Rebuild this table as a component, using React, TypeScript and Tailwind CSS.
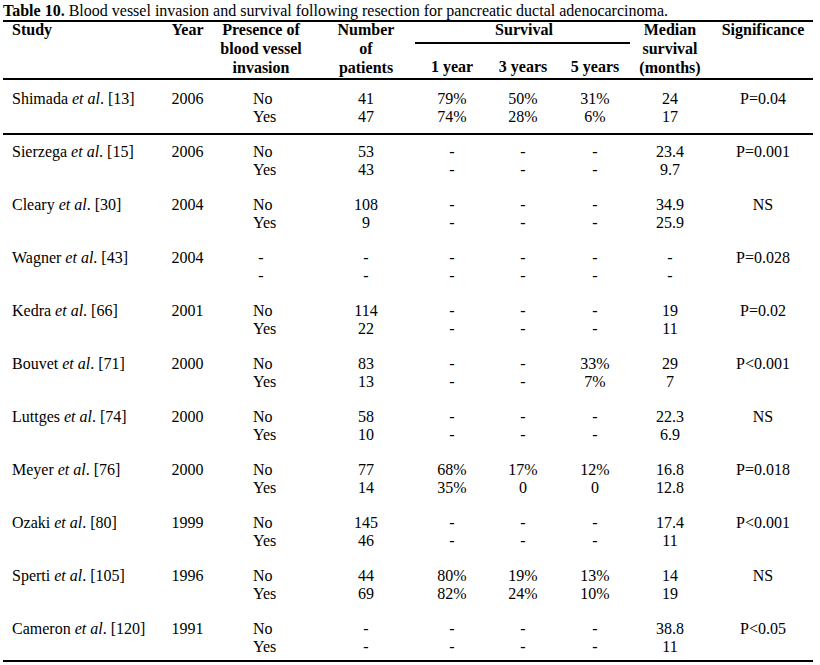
const rows = [
  { study: "Shimada", ref: "[13]", year: "2006", inv: ["No", "Yes"], n: ["41", "47"], y1: ["79%", "74%"], y3: ["50%", "28%"], y5: ["31%", "6%"], med: ["24", "17"], sig: "P=0.04" },
  { study: "Sierzega", ref: "[15]", year: "2006", inv: ["No", "Yes"], n: ["53", "43"], y1: ["-", "-"], y3: ["-", "-"], y5: ["-", "-"], med: ["23.4", "9.7"], sig: "P=0.001" },
  { study: "Cleary", ref: "[30]", year: "2004", inv: ["No", "Yes"], n: ["108", "9"], y1: ["-", "-"], y3: ["-", "-"], y5: ["-", "-"], med: ["34.9", "25.9"], sig: "NS" },
  { study: "Wagner", ref: "[43]", year: "2004", inv: ["-", "-"], n: ["-", "-"], y1: ["-", "-"], y3: ["-", "-"], y5: ["-", "-"], med: ["-", "-"], sig: "P=0.028" },
  { study: "Kedra", ref: "[66]", year: "2001", inv: ["No", "Yes"], n: ["114", "22"], y1: ["-", "-"], y3: ["-", "-"], y5: ["-", "-"], med: ["19", "11"], sig: "P=0.02" },
  { study: "Bouvet", ref: "[71]", year: "2000", inv: ["No", "Yes"], n: ["83", "13"], y1: ["-", "-"], y3: ["-", "-"], y5: ["33%", "7%"], med: ["29", "7"], sig: "P<0.001" },
  { study: "Luttges", ref: "[74]", year: "2000", inv: ["No", "Yes"], n: ["58", "10"], y1: ["-", "-"], y3: ["-", "-"], y5: ["-", "-"], med: ["22.3", "6.9"], sig: "NS" },
  { study: "Meyer", ref: "[76]", year: "2000", inv: ["No", "Yes"], n: ["77", "14"], y1: ["68%", "35%"], y3: ["17%", "0"], y5: ["12%", "0"], med: ["16.8", "12.8"], sig: "P=0.018" },
  { study: "Ozaki", ref: "[80]", year: "1999", inv: ["No", "Yes"], n: ["145", "46"], y1: ["-", "-"], y3: ["-", "-"], y5: ["-", "-"], med: ["17.4", "11"], sig: "P<0.001" },
  { study: "Sperti", ref: "[105]", year: "1996", inv: ["No", "Yes"], n: ["44", "69"], y1: ["80%", "82%"], y3: ["19%", "24%"], y5: ["13%", "10%"], med: ["14", "19"], sig: "NS" },
  { study: "Cameron", ref: "[120]", year: "1991", inv: ["No", "Yes"], n: ["-", "-"], y1: ["-", "-"], y3: ["-", "-"], y5: ["-", "-"], med: ["38.8", "11"], sig: "P<0.05" },
]

function Pair({ v, className }: { v: string[]; className: string }) {
  return (
    <div className={className}>
      <div>{v[0]}</div>
      <div>{v[1]}</div>
    </div>
  )
}

export default function App() {
  return (
    <div className="w-[820px] h-[665px] bg-white text-black text-[16px] leading-[18px] pl-[3px] pt-[2px]" style={{ fontFamily: '"Liberation Serif", "Times New Roman", serif' }}>
      <div className="w-[810px]">
        <div className="whitespace-nowrap">
          <b>Table 10.</b> Blood vessel invasion and survival following resection for pancreatic ductal adenocarcinoma.
        </div>
        <div className="border-t-2 border-black" />

        {/* header */}
        <div className="flex font-bold leading-[19px] h-[60px] mt-[-2px] border-b-2 border-black">
          <div className="w-[160px] pl-[9px]">Study</div>
          <div className="w-[49px] text-center">Year</div>
          <div className="w-[98px] text-center">Presence of<br />blood vessel<br />invasion</div>
          <div className="w-[112px] text-center">Number<br />of<br />patients</div>
          <div className="w-[204px] flex flex-col">
            <div className="text-center">Survival</div>
            <div className="border-t-2 border-black mt-[3px] ml-[-7px] mr-[-4px]" />
            <div className="flex mt-[13px]">
              <div className="w-[60px] text-center">1 year</div>
              <div className="w-[82px] text-center">3 years</div>
              <div className="w-[62px] text-center">5 years</div>
            </div>
          </div>
          <div className="w-[88px] text-center">Median<br />survival<br />(months)</div>
          <div className="w-[98px] text-center">Significance</div>
        </div>

        {rows.map((r, i) => (
          <div key={r.study} className={"flex " + (i === 0 ? "pt-[10px] pb-[7px] border-b-2 border-black" : i === rows.length - 1 ? "pt-[8px] pb-[4px] border-b-2 border-black" : "pt-[8px] pb-[9px]")}>
            <div className="w-[160px] pl-[9px] whitespace-nowrap">
              {r.study} <i>et al</i>. {r.ref}
            </div>
            <div className="w-[49px] text-center">{r.year}</div>
            <Pair v={r.inv} className={"w-[98px] " + (r.inv[0] === "-" ? "text-center" : "pl-[41px]")} />
            <Pair v={r.n} className="w-[112px] text-center" />
            <Pair v={r.y1} className="w-[60px] text-center" />
            <Pair v={r.y3} className="w-[82px] text-center" />
            <Pair v={r.y5} className="w-[62px] text-center" />
            <Pair v={r.med} className="w-[88px] text-center" />
            <div className="w-[98px] text-center">{r.sig}</div>
          </div>
        ))}
      </div>
    </div>
  )
}
